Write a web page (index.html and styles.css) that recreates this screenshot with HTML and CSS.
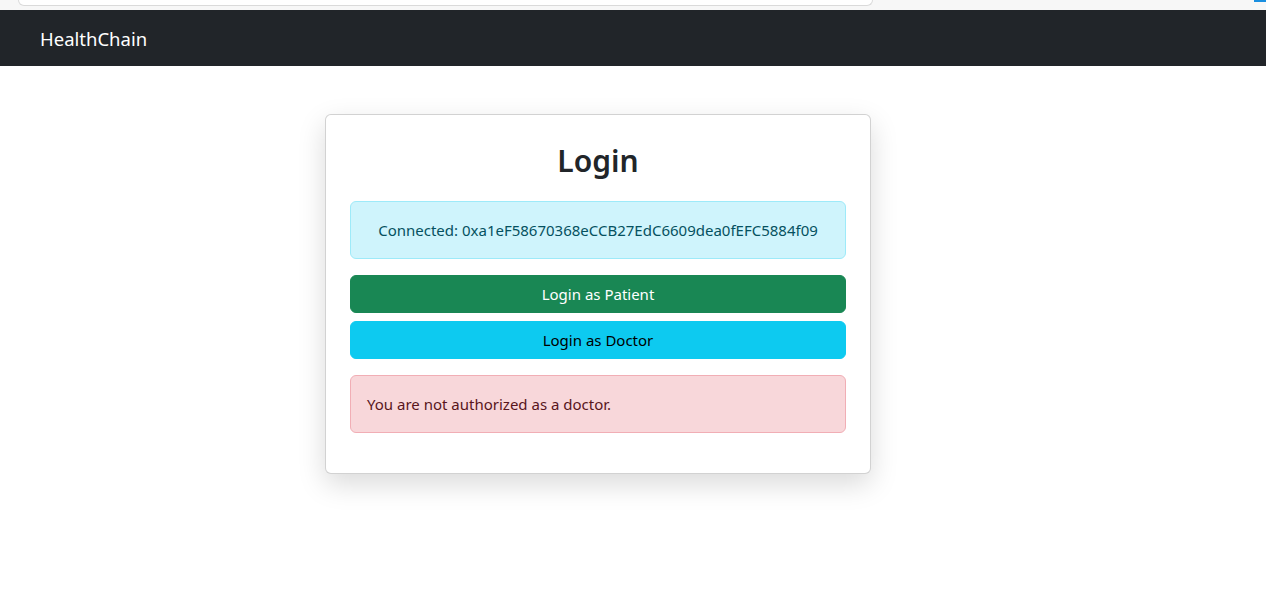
FILE: index.html
```html
<!DOCTYPE html>
<html lang="en">
<head>
<meta charset="utf-8">
<title>HealthChain</title>
<link rel="stylesheet" href="styles.css">
</head>
<body>
<div class="chrome">
  <div class="chrome-field"></div>
  <div class="chrome-dot"></div>
</div>
<nav class="navbar">
  <span class="brand">HealthChain</span>
</nav>
<main class="main">
  <section class="card">
    <h2 class="title">Login</h2>
    <div class="alert alert-info">Connected: 0xa1eF58670368eCCB27EdC6609dea0fEFC5884f09</div>
    <div class="actions">
      <button class="btn btn-success">Login as Patient</button>
      <button class="btn btn-info">Login as Doctor</button>
    </div>
    <div class="alert alert-danger">You are not authorized as a doctor.</div>
  </section>
</main>
</body>
</html>
```

FILE: styles.css
```css
* { box-sizing: border-box; }
html, body { margin: 0; padding: 0; background: #fff; }
body {
  font-family: "Noto Sans", "Open Sans", sans-serif;
  font-size: 16px;
  line-height: 1.5;
  color: #212529;
  min-height: 614px;
}
.chrome {
  height: 10px;
  background: #f7f7f7;
  display: flex;
  justify-content: space-between;
  align-items: flex-start;
  overflow: hidden;
}
.chrome-field {
  width: 855px;
  height: 6px;
  margin-left: 18px;
  background: #fff;
  border: 1px solid #dadada;
  border-top: none;
  border-radius: 0 0 14px 14px;
}
.chrome-dot {
  width: 12px;
  height: 2px;
  background: #1a8fe0;
}
.navbar {
  height: 56px;
  background: #212529;
  display: flex;
  align-items: center;
  padding: 2px 0 0 40px;
}
.brand {
  color: #fff;
  font-size: 18.5px;
  line-height: 1;
}
.main {
  padding: 48px 0 60px 325px;
}
.card {
  width: 546px;
  background: #fff;
  border: 1px solid rgba(0,0,0,0.175);
  border-radius: 6px;
  box-shadow: 0 10px 28px rgba(0,0,0,0.15);
  padding: 24px;
}
.title {
  margin: 0 0 20px;
  padding-top: 2px;
  text-align: center;
  font-size: 30px;
  font-weight: 600;
  line-height: 40px;
  color: #212529;
}
.alert {
  border: 1px solid transparent;
  border-radius: 6px;
  padding: 16px;
  font-size: 15px;
  line-height: 24px;
}
.alert-info {
  background: #cff4fc;
  border-color: #9eeaf9;
  color: #055160;
  text-align: center;
  margin-bottom: 16px;
}
.alert-danger {
  background: #f8d7da;
  border-color: #f1aeb5;
  color: #58151c;
  margin-top: 16px;
  margin-bottom: 16px;
}
.actions {
  display: flex;
  flex-direction: column;
  gap: 8px;
}
.btn {
  display: block;
  width: 100%;
  height: 38px;
  border: 1px solid transparent;
  border-radius: 6px;
  font-family: inherit;
  font-size: 15px;
  line-height: 24px;
  padding: 6px 12px;
  text-align: center;
  cursor: pointer;
}
.btn-success {
  background: #198754;
  border-color: #198754;
  color: #fff;
}
.btn-info {
  background: #0dcaf0;
  border-color: #0dcaf0;
  color: #000;
}
```
